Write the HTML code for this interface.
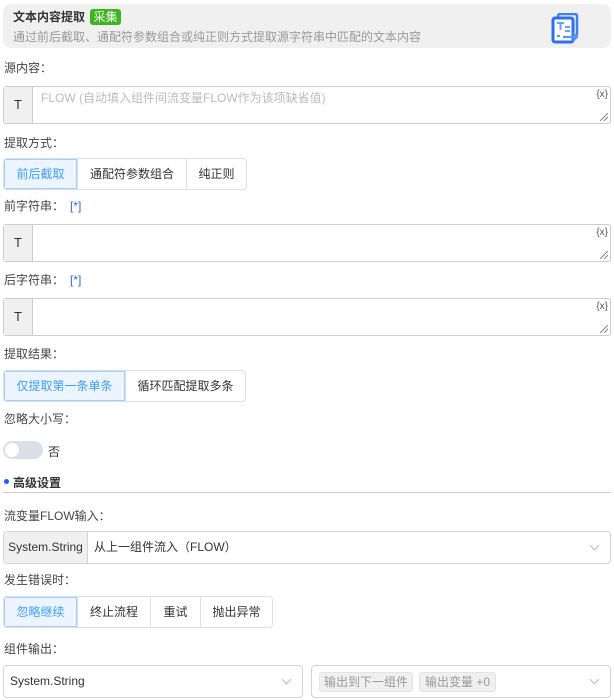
<!DOCTYPE html><html><head><meta charset="utf-8"><style>
*{box-sizing:border-box;margin:0;padding:0}
body{width:614px;height:700px;background:#fff;font-family:"Liberation Sans","Noto Sans CJK SC",sans-serif;font-size:12px;color:#333;position:relative;overflow:hidden}
.a{position:absolute}
.lbl{position:absolute;left:4px;font-size:12px;color:#444;line-height:14px}
.req{color:#3a64d8;margin-left:6px}
.ta{position:absolute;left:3px;width:608px;height:38px;border:1px solid #ccc;border-radius:3px;background:#fff}
.ta .t{position:absolute;left:0;top:0;bottom:0;width:29px;background:#f0f0f0;border-right:1px solid #ccc;text-align:center;line-height:36px;font-size:13px;color:#333}
.ta .x{position:absolute;right:2px;top:2px;font-size:10px;color:#555}
.ta .rs{position:absolute;right:2px;bottom:2px;width:8px;height:8px;background:linear-gradient(135deg,transparent 45%,#888 45%,#888 55%,transparent 55%,transparent 70%,#888 70%,#888 80%,transparent 80%)}
.bg{position:absolute;left:3px;height:32px;display:flex;border:1px solid #dcdfe6;border-radius:4px;overflow:hidden}
.bg div{height:30px;line-height:30px;text-align:center;font-size:12px;color:#333;border-left:1px solid #dcdfe6}
.bg div:first-child{border-left:none}
.bg .on{background:#ecf5ff;color:#409eff;box-shadow:inset 0 0 0 1px #a0cfff}
.sel{position:absolute;height:33px;border:1px solid #d4d4d4;border-radius:4px;background:#fff}
.chev{position:absolute;right:12px;top:10px;width:7px;height:7px;border-right:1px solid #bbb;border-bottom:1px solid #bbb;transform:rotate(45deg)}
.tag{position:absolute;top:6px;height:20px;line-height:19px;background:#f0f0f0;border:1px solid #e4e4e4;border-radius:3px;color:#999;font-size:12px;text-align:center;white-space:nowrap}
</style></head><body>
<div class="a" style="left:3px;top:4px;width:608px;height:44px;background:#f0f0f0;border-radius:8px"></div>
<div class="a" style="left:13px;top:10px;font-weight:bold;font-size:12px;color:#333;line-height:14px">文本内容提取</div>
<div class="a" style="left:90px;top:9px;width:31px;height:16px;background:#3cb521;border-radius:3px;color:#fff;font-size:12px;line-height:16px;text-align:center">采集</div>
<div class="a" style="left:13px;top:30px;font-size:12px;color:#999;line-height:14px">通过前后截取、通配符参数组合或纯正则方式提取源字符串中匹配的文本内容</div>
<svg class="a" style="left:551px;top:13px" width="34" height="32" viewBox="0 0 34 32"><rect x="7" y="1" width="19" height="22" rx="2" fill="none" stroke="#3a80f0" stroke-width="2.5"/><rect x="2" y="5" width="20" height="24" rx="2" fill="#fff" stroke="#2a70f0" stroke-width="3"/><path d="M6 10h7M9.5 10v7M14 14h5M14 18h5" stroke="#6aa0f8" stroke-width="2"/><path d="M6 23h3M12 24h14M22 20l4 4-4 4" stroke="#5a96f6" stroke-width="2.2" fill="none"/></svg>

<div class="lbl" style="top:61px">源内容：</div>
<div class="ta" style="top:86px"><div class="t">T</div><div class="a" style="left:37px;top:2px;color:#bbb;font-size:12px">FLOW (自动填入组件间流变量FLOW作为该项缺省值)</div><div class="x">{x}</div><div class="rs"></div></div>

<div class="lbl" style="top:136px">提取方式：</div>
<div class="bg" style="top:158px"><div class="on" style="width:73px">前后截取</div><div style="width:109px">通配符参数组合</div><div style="width:60px">纯正则</div></div>

<div class="lbl" style="top:199px">前字符串：<span class="req">[*]</span></div>
<div class="ta" style="top:224px"><div class="t">T</div><div class="x">{x}</div><div class="rs"></div></div>

<div class="lbl" style="top:273px">后字符串：<span class="req">[*]</span></div>
<div class="ta" style="top:298px"><div class="t">T</div><div class="x">{x}</div><div class="rs"></div></div>

<div class="lbl" style="top:347px">提取结果：</div>
<div class="bg" style="top:370px"><div class="on" style="width:121px">仅提取第一条单条</div><div style="width:120px">循环匹配提取多条</div></div>

<div class="lbl" style="top:412px">忽略大小写：</div>
<div class="a" style="left:3px;top:441px;width:40px;height:18px;border-radius:9px;background:#dcdfe6"></div>
<div class="a" style="left:5px;top:443px;width:14px;height:14px;border-radius:7px;background:#fff"></div>
<div class="a" style="left:48px;top:443px;font-size:12px;color:#333">否</div>

<div class="a" style="left:4px;top:479px;width:5px;height:5px;border-radius:50%;background:#1a5ff0"></div>
<div class="a" style="left:13px;top:474px;font-weight:bold;font-size:12px;color:#333">高级设置</div>
<div class="a" style="left:3px;top:492px;width:608px;height:1px;background:#ccc"></div>

<div class="lbl" style="top:509px">流变量FLOW输入：</div>
<div class="sel" style="left:3px;top:531px;width:608px;overflow:hidden"><div class="a" style="left:0;top:0;width:84px;height:31px;background:#f0f0f0;border-right:1px solid #d4d4d4;line-height:31px;text-align:center;font-size:12px;color:#333">System.String</div><div class="a" style="left:90px;top:0;line-height:31px;font-size:12px;color:#333">从上一组件流入（FLOW）</div><div class="chev"></div></div>

<div class="lbl" style="top:573px">发生错误时：</div>
<div class="bg" style="top:596px"><div class="on" style="width:73px">忽略继续</div><div style="width:73px">终止流程</div><div style="width:50px">重试</div><div style="width:72px">抛出异常</div></div>

<div class="lbl" style="top:642px">组件输出：</div>
<div class="sel" style="left:3px;top:665px;width:300px"><div class="a" style="left:6px;top:0;line-height:31px;font-size:12px;color:#333">System.String</div><div class="chev"></div></div>
<div class="sel" style="left:311px;top:665px;width:300px"><div class="tag" style="left:7px;width:94px">输出到下一组件</div><div class="tag" style="left:107px;width:77px">输出变量 +0</div><div class="chev"></div></div>
</body></html>
